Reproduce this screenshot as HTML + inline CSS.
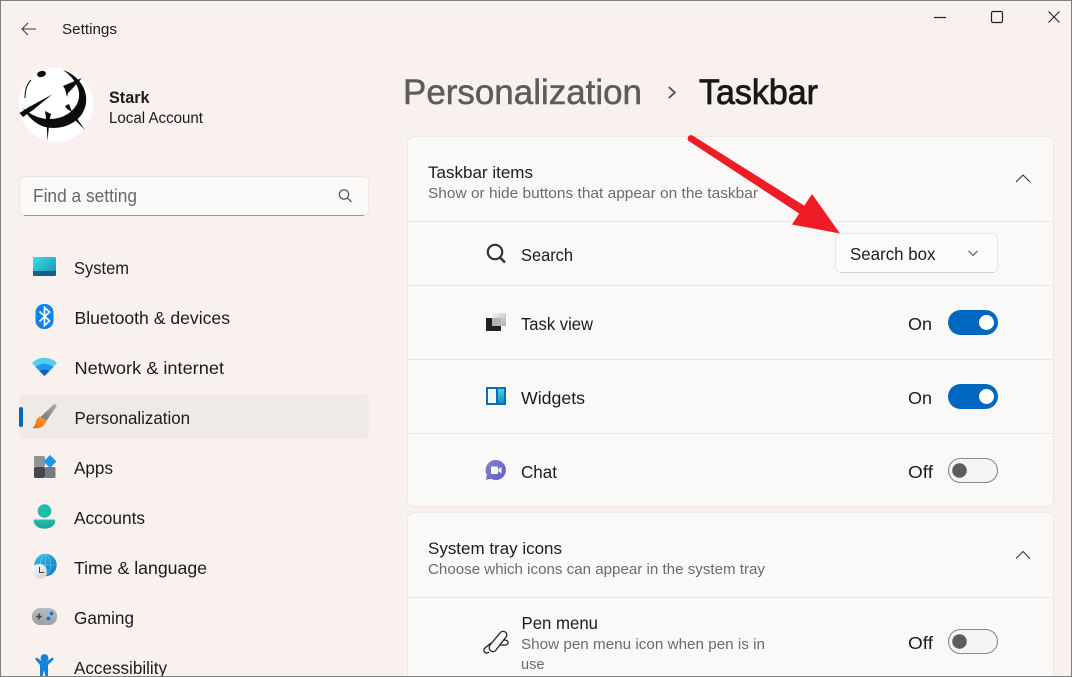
<!DOCTYPE html>
<html lang="en"><head><meta charset="utf-8"><title>Settings</title>
<style>
html,body{margin:0;padding:0;background:#f8f1ed;width:1072px;height:677px;overflow:hidden}
svg{display:block;position:absolute;left:0;top:0}
text{font-family:"Liberation Sans",sans-serif;fill:#1c1c1c}
.n{font-size:17.5px}
.r{font-size:17.5px}
.h{font-size:17px}
.s{font-size:14.5px;fill:#6d6b6a}
</style></head><body>
<svg width="1072" height="677" viewBox="0 0 1072 677" xmlns="http://www.w3.org/2000/svg">
<defs>
<linearGradient id="g1" x1="0" y1="0" x2="1" y2="1"><stop offset="0" stop-color="#40dcea"/><stop offset="1" stop-color="#1590b8"/></linearGradient>
<linearGradient id="g2" x1="1" y1="0" x2="0" y2="1"><stop offset="0" stop-color="#a9adb0"/><stop offset="1" stop-color="#6f7478"/></linearGradient>
<linearGradient id="g3" x1="1" y1="0" x2="0" y2="1"><stop offset="0" stop-color="#ffa21c"/><stop offset="1" stop-color="#e8641a"/></linearGradient>
<linearGradient id="g4" x1="0" y1="0" x2="0" y2="1"><stop offset="0" stop-color="#22bfae"/><stop offset="1" stop-color="#13a596"/></linearGradient>
<linearGradient id="g5" x1="0" y1="0" x2="1" y2="1"><stop offset="0" stop-color="#35c4e4"/><stop offset="1" stop-color="#0b72c8"/></linearGradient>
<linearGradient id="g6" x1="0" y1="0" x2="1" y2="1"><stop offset="0" stop-color="#8a80d8"/><stop offset="1" stop-color="#5a5fc4"/></linearGradient>
<linearGradient id="g7" x1="0" y1="0" x2="1" y2="1"><stop offset="0" stop-color="#ffffff"/><stop offset="1" stop-color="#cfcfcf"/></linearGradient>
<linearGradient id="g8" x1="0" y1="0" x2="0" y2="1"><stop offset="0" stop-color="#3cd8e0"/><stop offset="1" stop-color="#1890b0"/></linearGradient>
<linearGradient id="g9" x1="0" y1="0" x2="0" y2="1"><stop offset="0" stop-color="#b8bcc0"/><stop offset="1" stop-color="#9ca1a6"/></linearGradient>
<linearGradient id="g10" x1="0" y1="0" x2="1" y2="1"><stop offset="0" stop-color="#f6f6f6"/><stop offset="1" stop-color="#b0b0b0"/></linearGradient>
</defs>

<rect width="1072" height="677" fill="#f8f1ed"/>

<!-- title bar -->
<path d="M36 29H22M28 23l-6 6 6 6" fill="none" stroke="#3d3d3d" stroke-width="1.100"/>
<text x="62" y="34" font-size="15" textLength="55" lengthAdjust="spacingAndGlyphs">Settings</text>
<path d="M934 17.500h12" stroke="#222" stroke-width="1.200"/>
<rect x="991.500" y="11.500" width="11" height="11" rx="1.500" fill="none" stroke="#222" stroke-width="1.200"/>
<path d="M1048.500 11.500l11 11M1059.500 11.500l-11 11" stroke="#222" stroke-width="1.100"/>

<!-- avatar -->
<circle cx="56" cy="105" r="37" fill="#fff"/>
<path d="M63 70C78 75 88 89 86 103C84 118 70 128 53 128C40 128 30 120 23 108C30 114 38 119 50 119C62 119 72 113 77 104C83 92 76 79 63 70Z" fill="#0c0c0c"/>
<ellipse cx="41.500" cy="74" rx="4.500" ry="3" fill="#0c0c0c" transform="rotate(-15 41.500 74)"/>
<path d="M19.500 113L29 107 52 94.500 33 110 23 117Z" fill="#0c0c0c"/>
<path d="M25 98C25 90 27 84 31 80" fill="none" stroke="#0c0c0c" stroke-width="1"/>
<path d="M63 86L82 78 72 89 68 93 67 97 65 89Z" fill="#0c0c0c"/>
<path d="M45 111l6 3 -1.500 6 -2 21 -1 -20Z M65 106l4-2 3 8 -5-3Z M76 117l9 13-10-10Z" fill="#0c0c0c"/>

<!-- search -->
<rect x="19.500" y="176.500" width="349" height="39" rx="5" fill="#fbf9f7" stroke="#ebe6e3"/>
<path d="M24 215.500h340" stroke="#9b9997"/>
<text x="33" y="202" font-size="18" style="fill:#6a6867" textLength="104" lengthAdjust="spacingAndGlyphs">Find a setting</text>
<circle cx="344" cy="194.500" r="4.700" fill="none" stroke="#444" stroke-width="1.100"/>
<path d="M347.500 198l4 4" stroke="#444" stroke-width="1.200"/>

<!-- active nav -->
<rect x="19" y="394" width="350" height="45" rx="5" fill="#f0eae7"/>
<rect x="19" y="407" width="4" height="20" rx="2" fill="#0067c0"/>

<!-- nav icons -->
<rect x="33" y="257" width="23" height="19" rx="1.500" fill="url(#g1)"/>
<path d="M33 271h23v3.500a1.500 1.500 0 0 1-1.500 1.500h-20a1.500 1.500 0 0 1-1.500-1.500Z" fill="#0f6388"/>
<rect x="35.500" y="304" width="18" height="25" rx="8.500" fill="#0a84f4"/>
<path d="M39.500 311.500l10 9.500-5 4.500V307.500l5 4.500-10 9.500" fill="none" stroke="#fff" stroke-width="1.700"/>
<path d="M32 363C39 356 50 356 57 363L44.500 376Z" fill="#55cdf0"/>
<path d="M35.500 367C41 362.500 48 362.500 53.500 367L44.500 376Z" fill="#1e9ae6"/>
<path d="M39.500 371C42.500 369 46.500 369 49.500 371L44.500 376Z" fill="#0b62b8"/>
<path d="M53.500 404.500C55 403.500 57 405 56.500 406.500L46 421.500 40 417.500Z" fill="url(#g2)"/>
<path d="M40 416.500C36.500 418 36 421 35.500 423.500 35 425.500 33.500 427 32.500 428 37.500 429 42.500 427.500 44.500 424.500 46 422.500 46.500 421 46 420.500Z" fill="url(#g3)"/>
<rect x="34" y="456" width="11" height="11" rx="1.500" fill="#8f9498"/>
<rect x="34" y="467" width="11" height="11" rx="1.500" fill="#45494c"/>
<rect x="45" y="467" width="10.500" height="11" rx="1.500" fill="#74797c"/>
<path d="M50 455l6.500 6.500-6.500 6.500-6.500-6.500Z" fill="#1a98ea"/>
<circle cx="44.500" cy="511" r="6.800" fill="#22bcab"/>
<path d="M34.500 519.500h20q.7 0 .7 1.500c0 4.500-5 7.700-10.700 7.700s-10.700-3.200-10.700-7.700q0-1.500.7-1.500Z" fill="url(#g4)"/>
<circle cx="45.500" cy="565" r="11.200" fill="url(#g5)"/>
<path d="M45.500 554v22M34.500 565h22M45.500 554c-7 6-7 16 0 22M45.500 554c7 6 7 16 0 22" fill="none" stroke="#8fe0f2" stroke-width=".6" opacity=".7"/>
<circle cx="39.500" cy="571.500" r="7.500" fill="url(#g7)"/>
<path d="M39.500 567v5.500h4.500" fill="none" stroke="#444" stroke-width="1"/>
<rect x="32" y="608" width="25" height="17" rx="8" fill="url(#g9)"/>
<path d="M36 616.500h6M39 613.500v6" stroke="#444" stroke-width="1.600"/>
<circle cx="51.500" cy="613.500" r="1.900" fill="#1074d8"/>
<circle cx="48.500" cy="618.500" r="1.900" fill="#1074d8"/>
<circle cx="44.500" cy="658" r="3.900" fill="#1480d8"/>
<path d="M35 659l1.500-1.500 6 4h4l6-4 1.500 1.500-6 6V677h-2.500l-1.500-7-1.500 7h-2.500V665Z" fill="#1480d8"/>

<!-- nav labels -->
<g>
<text class="n" x="74" y="274" textLength="55" lengthAdjust="spacingAndGlyphs">System</text>
<text class="n" x="74.500" y="324" textLength="155.500" lengthAdjust="spacingAndGlyphs">Bluetooth &amp; devices</text>
<text class="n" x="74.500" y="374" textLength="149.500" lengthAdjust="spacingAndGlyphs">Network &amp; internet</text>
<text class="n" x="74.500" y="424" textLength="115.500" lengthAdjust="spacingAndGlyphs">Personalization</text>
<text class="n" x="74" y="474" textLength="39" lengthAdjust="spacingAndGlyphs">Apps</text>
<text class="n" x="74" y="524" textLength="71" lengthAdjust="spacingAndGlyphs">Accounts</text>
<text class="n" x="74" y="574" textLength="133" lengthAdjust="spacingAndGlyphs">Time &amp; language</text>
<text class="n" x="74" y="624" textLength="60" lengthAdjust="spacingAndGlyphs">Gaming</text>
<text class="n" x="74" y="674" textLength="93" lengthAdjust="spacingAndGlyphs">Accessibility</text>
</g>

<text x="109" y="103" font-size="17" font-weight="700" textLength="40.500" lengthAdjust="spacingAndGlyphs">Stark</text>
<text x="109" y="123" font-size="15.500" textLength="94" lengthAdjust="spacingAndGlyphs">Local Account</text>

<!-- heading -->
<text x="403" y="104" font-size="35" textLength="239" lengthAdjust="spacingAndGlyphs" style="fill:#5e5c5b;stroke:#5e5c5b;stroke-width:.5">Personalization</text>
<path d="M668.800 87l6 5.500-6 5.500" fill="none" stroke="#4e4c4b" stroke-width="1.800"/>
<text x="699" y="104" font-size="35" textLength="119" lengthAdjust="spacingAndGlyphs" style="fill:#191919;stroke:#191919;stroke-width:.8">Taskbar</text>

<!-- card 1 -->
<rect x="407.500" y="136.500" width="646" height="370" rx="6" fill="#fbf9f8" stroke="#ede8e5"/>
<path d="M408 221.500h645M408 285.500h645M408 359.500h645M408 433.500h645" stroke="#e9e6e3"/>
<text class="h" x="428" y="178" textLength="105" lengthAdjust="spacingAndGlyphs">Taskbar items</text>
<text class="s" x="428" y="198" textLength="330" lengthAdjust="spacingAndGlyphs">Show or hide buttons that appear on the taskbar</text>
<path d="M1016 182l7-7 7 7" fill="none" stroke="#333" stroke-width="1.100"/>

<circle cx="495" cy="252" r="7.200" fill="none" stroke="#333" stroke-width="2.200"/>
<path d="M500 257.500l5 5" stroke="#333" stroke-width="2.400"/>
<text class="r" x="521" y="261" textLength="52" lengthAdjust="spacingAndGlyphs">Search</text>

<rect x="835.500" y="233.500" width="162" height="39" rx="5" fill="#fdfcfc" stroke="#e9e6e4"/>
<path d="M840 272.500h154" stroke="#d2d0ce"/>
<text class="r" x="850" y="260" textLength="85.500" lengthAdjust="spacingAndGlyphs">Search box</text>
<path d="M968.500 251l4.500 4.500 4.500-4.500" fill="none" stroke="#555" stroke-width="1.100"/>

<!-- task view -->
<rect x="492" y="313" width="14" height="13" fill="url(#g10)"/>
<rect x="486" y="318" width="15" height="13" fill="#222"/>
<rect x="492" y="318" width="9" height="8" fill="#b4b4b4"/>
<text class="r" x="521" y="330" textLength="72" lengthAdjust="spacingAndGlyphs">Task view</text>
<text class="r" x="908" y="330" textLength="24" lengthAdjust="spacingAndGlyphs">On</text>
<rect x="948" y="310" width="50" height="25" rx="12.500" fill="#0067c0"/>
<circle cx="986.500" cy="322.500" r="7.500" fill="#fff"/>

<!-- widgets -->
<rect x="486" y="387" width="20" height="18" fill="#0f6cbd"/>
<rect x="488" y="389" width="8" height="14" fill="#f3f5f8"/>
<rect x="498" y="389" width="6" height="14" fill="url(#g8)"/>
<text class="r" x="521" y="404" textLength="64" lengthAdjust="spacingAndGlyphs">Widgets</text>
<text class="r" x="908" y="404" textLength="24" lengthAdjust="spacingAndGlyphs">On</text>
<rect x="948" y="384" width="50" height="25" rx="12.500" fill="#0067c0"/>
<circle cx="986.500" cy="396.500" r="7.500" fill="#fff"/>

<!-- chat -->
<path d="M496 460a10 10 0 1 1-5 18.700l-5 1 .8-5A10 10 0 0 1 496 460Z" fill="url(#g6)"/>
<rect x="491" y="466.500" width="7" height="7.500" rx="1" fill="#fff"/>
<path d="M498.500 469l3-2v6.500l-3-2Z" fill="#fff"/>
<text class="r" x="521" y="478" textLength="36" lengthAdjust="spacingAndGlyphs">Chat</text>
<text class="r" x="908" y="478" textLength="25" lengthAdjust="spacingAndGlyphs">Off</text>
<rect x="948.500" y="458.500" width="49" height="24" rx="12" fill="#f6f4f3" stroke="#8b8988" stroke-width="1.100"/>
<circle cx="959.500" cy="470.500" r="7.300" fill="#5e5c5c"/>

<!-- card 2 -->
<rect x="407.500" y="512.500" width="646" height="180" rx="6" fill="#fbf9f8" stroke="#ede8e5"/>
<path d="M408 597.500h645" stroke="#e9e6e3"/>
<text class="h" x="428" y="554" textLength="134" lengthAdjust="spacingAndGlyphs">System tray icons</text>
<text class="s" x="428" y="574" textLength="337" lengthAdjust="spacingAndGlyphs">Choose which icons can appear in the system tray</text>
<path d="M1016 558.500l7-7 7 7" fill="none" stroke="#333" stroke-width="1.100"/>

<path d="M490 645L500 633C503 629 509 633 506 637L496 650C493 654 487 650 490 645Z" fill="none" stroke="#222" stroke-width="1.300"/>
<path d="M491 643L485 648C482 651 486 655 489 652M504 640C509 640 509 644 506 645L500 645" fill="none" stroke="#222" stroke-width="1.300"/>
<text class="r" x="521.500" y="629" textLength="76.500" lengthAdjust="spacingAndGlyphs">Pen menu</text>
<text class="s" x="521" y="649" textLength="244" lengthAdjust="spacingAndGlyphs">Show pen menu icon when pen is in</text>
<text class="s" x="521" y="669" textLength="23.500" lengthAdjust="spacingAndGlyphs">use</text>
<text class="r" x="908" y="649" textLength="25" lengthAdjust="spacingAndGlyphs">Off</text>
<rect x="948.500" y="629.500" width="49" height="24" rx="12" fill="#f6f4f3" stroke="#8b8988" stroke-width="1.100"/>
<circle cx="959.500" cy="641.500" r="7.300" fill="#5e5c5c"/>

<!-- arrow -->
<path d="M689.500 141.500L692.500 135.500 808 208 803 216Z" fill="#ee1c25"/>
<circle cx="691" cy="138.500" r="3.400" fill="#ee1c25"/>
<path d="M812 194L840 233.500 792 224.500Z" fill="#ee1c25"/>

<!-- window border -->
<rect x=".5" y=".5" width="1071" height="676" fill="none" stroke="#7f7f7f"/>
</svg>
</body></html>
